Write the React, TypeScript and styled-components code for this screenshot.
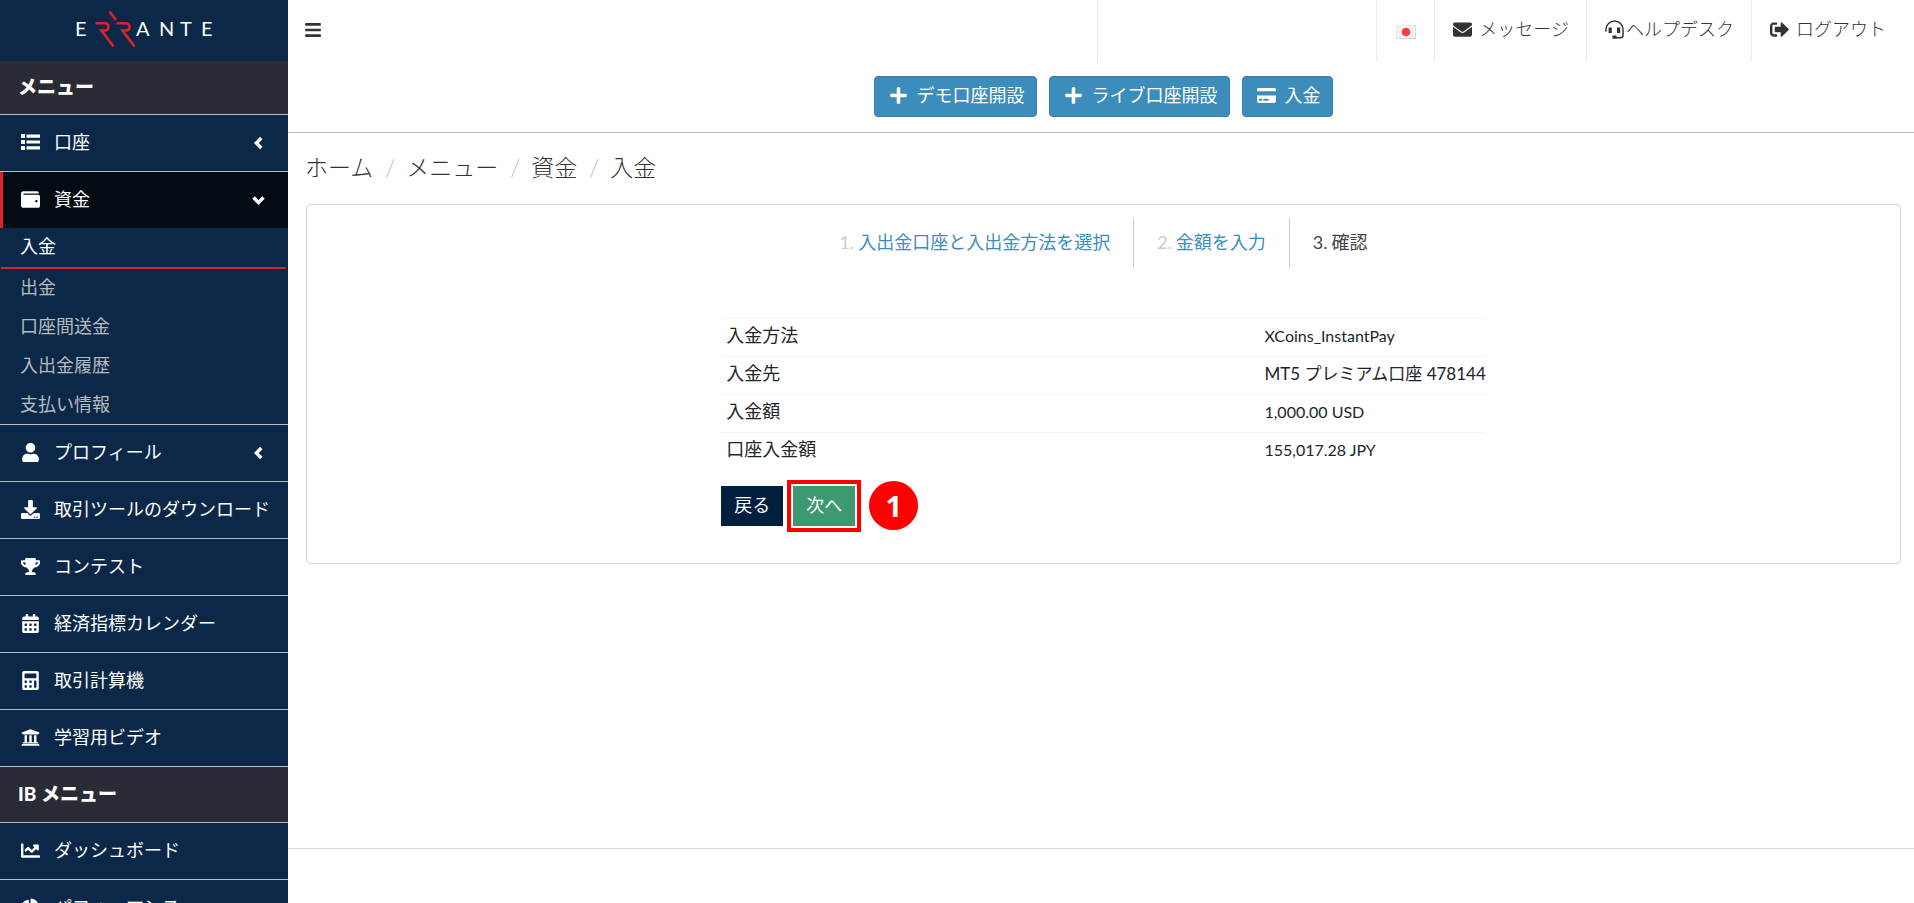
import React from 'react';
import styled, { createGlobalStyle, css } from 'styled-components';
import {
  FaBars,
  FaCalculator,
  FaCalendarAlt,
  FaChartLine,
  FaChartPie,
  FaCreditCard,
  FaDownload,
  FaEnvelope,
  FaPlus,
  FaSignOutAlt,
  FaTrophy,
  FaUniversity,
  FaUser,
  FaWallet,
} from 'react-icons/fa';

const GlobalStyle = createGlobalStyle`
  *, *::before, *::after { box-sizing: border-box; }
  body {
    margin: 0;
    background: #fff;
    color: #212529;
    font-family: Lato, "Noto Sans CJK JP", sans-serif;
    font-size: 18px;
    line-height: 24px;
  }
  a { color: inherit; text-decoration: none; }
  ul, ol { margin: 0; padding: 0; list-style: none; }
  button { font: inherit; cursor: pointer; }
`;

const Page = styled.div`
  display: flex;
  height: 100vh;
  overflow: hidden;
`;

const Sidebar = styled.aside`
  flex: 0 0 288px;
  overflow: hidden;
  background: #0c2848;
  color: #fff;
`;

const Brand = styled.a`
  display: flex;
  justify-content: center;
  height: 61px;
  padding-top: 8px;
`;

const MenuHeading = styled.h2`
  display: flex;
  align-items: center;
  height: 54px;
  margin: 0;
  padding: 0 18px 2px;
  border-bottom: 1px solid #b9bec4;
  background: #292c34;
  font-size: 19px;
  font-weight: 900;
  &:not(:first-child) { height: 56px; }
`;

const MenuLink = styled.a<{ $open?: boolean }>`
  display: flex;
  align-items: center;
  height: 57px;
  padding: 0 22px 2px 21px;
  border-bottom: 1px solid #b9bec4;
  white-space: nowrap;
  ${(p) =>
    p.$open &&
    css`
      height: 56px;
      padding-left: 18px;
      border-left: 3px solid #dc2328;
      border-bottom: 0;
      background: #040b13;
    `}
`;

const MenuIcon = styled.span`
  display: flex;
  flex: 0 0 33px;
  font-size: 19px;
  svg { width: auto; height: 19px; }
`;

const MenuArrow = styled.svg`
  flex: none;
  margin: 1px 0 0 auto;
`;

const SubItem = styled.li<{ $active?: boolean }>`
  height: 39px;
  padding: 6px 20px 0;
  color: #b9bcbf;
  &:last-child { border-bottom: 1px solid #b9bec4; }
  ${(p) =>
    p.$active &&
    css`
      height: 41px;
      margin: 0 2px 0 1px;
      padding-left: 19px;
      border-bottom: 2px solid #dc2328;
      color: #fff;
    `}
`;

const Main = styled.div`
  display: flex;
  flex: 1;
  flex-direction: column;
  min-width: 0;
`;

const Header = styled.header`
  border-bottom: 1px solid #b9b9b9;
`;

const TopBar = styled.div`
  display: flex;
  justify-content: space-between;
  height: 62px;
`;

const Toggle = styled.button`
  display: flex;
  align-items: center;
  padding: 0 16px 2px;
  border: 0;
  background: none;
  color: #333;
  font-size: 18px;
`;

const TopNav = styled.nav`
  display: flex;
`;

const NavSlot = styled.div`
  width: 279px;
  border-left: 1px solid #ededed;
`;

const NavLink = styled.a<{ $gap?: number; $last?: boolean }>`
  display: flex;
  align-items: center;
  gap: ${(p) => p.$gap ?? 7}px;
  padding: 0 ${(p) => (p.$last ? 28 : 17)}px 4px 18px;
  border-left: 1px solid #ededed;
  color: #333;
  font-weight: 300;
  svg { font-size: 19px; }
`;

const Flag = styled.svg`
  margin-top: 6px;
`;

const Actions = styled.div`
  display: flex;
  justify-content: center;
  gap: 12px;
  padding: 14px 0 15px 4px;
`;

const ActionButton = styled.button`
  display: flex;
  align-items: center;
  gap: 9px;
  height: 41px;
  padding: 0 11px 3px 14px;
  border: 1px solid #367fa9;
  border-radius: 4px;
  background: #3c8dbc;
  color: #fff;
  svg { width: auto; height: 19px; }
`;

const Crumbs = styled.ol`
  display: flex;
  align-items: center;
  height: 71px;
  padding: 0 0 4px 17px;
  color: #333;
  font-size: 23px;
  font-weight: 300;
`;

const Crumb = styled.li`
  & + &::before {
    content: "/";
    padding: 0 11px 0 12px;
    color: #bbb;
  }
`;

const Card = styled.section`
  min-height: 360px;
  margin: 0 13px 0 18px;
  padding: 13px 0 35px;
  border: 1px solid #d2d6de;
  border-radius: 4px;
`;

const Steps = styled.ol`
  display: flex;
  justify-content: center;
`;

const Step = styled.li<{ $done?: boolean }>`
  display: flex;
  gap: 4px;
  height: 50px;
  padding: 12px 23px 0;
  color: ${(p) => (p.$done ? '#ccc' : '#444')};
  & + & { border-left: 1px solid #ccc; }
  a { color: #3c8dbc; }
`;

const Details = styled.div`
  width: 48%;
  margin: 50px auto 0;
`;

const Table = styled.table`
  width: 100%;
  border-collapse: collapse;
  th, td {
    height: 38px;
    padding: 0 0 5px 5px;
    border-top: 1px solid #f4f4f4;
    font-weight: 400;
    text-align: left;
    white-space: nowrap;
  }
  td {
    width: 227px;
    padding: 0 0 3px 6px;
    font-size: 16px;
  }
  td:lang(ja) { font-size: 17px; }
`;

const FormButtons = styled.div`
  display: flex;
  gap: 10px;
  margin-top: 15px;
`;

const FormButton = styled.button<{ $primary?: boolean }>`
  height: 40px;
  padding: 0 13px 2px;
  border: 0;
  background: ${(p) => (p.$primary ? '#3d9970' : '#001f3f')};
  color: #fff;
`;

const Highlighted = styled.div`
  position: relative;
  height: 40px;
  outline: 4px solid #f00;
  outline-offset: 2px;
`;

const StepMarker = styled.span`
  position: absolute;
  top: -5px;
  left: calc(100% + 14px);
  display: grid;
  place-items: center;
  width: 49px;
  height: 49px;
  border-radius: 50%;
  background: #f00;
  color: #fff;
  font: 700 29px/49px "Noto Sans", sans-serif;
`;

const Footer = styled.footer`
  height: 55px;
  margin-top: auto;
  border-top: 1px solid #d2d6de;
`;

function Logo() {
  return (
    <svg width="138" height="42" viewBox="0 0 138 42" role="img" aria-label="ERRANTE">
      <text
        x="0 61 84 105 126"
        y="28"
        fill="#fff"
        fontFamily="Lato, sans-serif"
        fontSize="20"
      >
        EANTE
      </text>
      <g fill="none" stroke="#dc2328" strokeWidth="2.600">
        <path d="M20.500 15.300h9c5 0 5.500 6.800 0 7.200h-3l12 16" />
        <path d="M34.500 3.500l6.500 8.500M41.500 15.300h9c5 0 5.500 6.800 0 7.200h-3l12 16" />
      </g>
    </svg>
  );
}

function ListIcon() {
  return (
    <svg viewBox="0 0 19 19" width="19" height="19" fill="currentColor">
      <path d="M0 1h4v4H0zM5.500 1.500H19v3.200H5.500zM0 7h4v4H0zM5.500 7.400H19v3.200H5.500zM0 13h4v4H0zM5.500 13.300H19v3.200H5.500z" />
    </svg>
  );
}

function HeadsetIcon() {
  return (
    <svg viewBox="0 0 19 19" width="19" height="19" fill="none" stroke="currentColor">
      <path d="M1 11.500V9.500a8.500 8.500 0 0 1 17 0v6a2.200 2.200 0 0 1-2.200 2.200H11" strokeWidth="1.500" />
      <path d="M5.200 7.400v5.600M13.600 7.400v5.600M7.500 17.200h4" strokeWidth="3.200" />
    </svg>
  );
}

function Arrow({ down }: { down?: boolean }) {
  return (
    <MenuArrow
      width="14"
      height="14"
      viewBox="0 0 14 14"
      fill="none"
      stroke="currentColor"
      strokeWidth="3.400"
    >
      <path d={down ? 'M1.500 4.500l5 5 5-5' : 'M9.300 2l-5 5 5 5'} />
    </MenuArrow>
  );
}

interface MenuEntry {
  label: string;
  Icon: React.ComponentType;
  arrow?: boolean;
}

const accounts: MenuEntry = { label: '口座', Icon: ListIcon, arrow: true };
const fundLinks = ['入金', '出金', '口座間送金', '入出金履歴', '支払い情報'];
const tools: MenuEntry[] = [
  { label: 'プロフィール', Icon: FaUser, arrow: true },
  { label: '取引ツールのダウンロード', Icon: FaDownload },
  { label: 'コンテスト', Icon: FaTrophy },
  { label: '経済指標カレンダー', Icon: FaCalendarAlt },
  { label: '取引計算機', Icon: FaCalculator },
  { label: '学習用ビデオ', Icon: FaUniversity },
];
const partnerLinks: MenuEntry[] = [
  { label: 'ダッシュボード', Icon: FaChartLine },
  { label: 'パフォーマンス', Icon: FaChartPie },
];
const details: { name: string; value: string; lang: string }[] = [
  { name: '入金方法', value: 'XCoins_InstantPay', lang: 'en' },
  { name: '入金先', value: 'MT5 プレミアム口座 478144', lang: 'ja' },
  { name: '入金額', value: '1,000.00 USD', lang: 'en' },
  { name: '口座入金額', value: '155,017.28 JPY', lang: 'en' },
];

function MenuRow({ label, Icon, arrow }: MenuEntry) {
  return (
    <MenuLink href="#">
      <MenuIcon><Icon /></MenuIcon>
      {label}
      {arrow && <Arrow />}
    </MenuLink>
  );
}

export default function App() {
  return (
    <Page>
      <GlobalStyle />
      <Sidebar>
        <Brand href="#"><Logo /></Brand>
        <nav>
          <MenuHeading>メニュー</MenuHeading>
          <MenuRow {...accounts} />
          <MenuLink href="#" $open>
            <MenuIcon><FaWallet /></MenuIcon>
            資金
            <Arrow down />
          </MenuLink>
          <ul>
            {fundLinks.map((label, i) => (
              <SubItem key={label} $active={i === 0}>
                <a href="#">{label}</a>
              </SubItem>
            ))}
          </ul>
          {tools.map((entry) => <MenuRow key={entry.label} {...entry} />)}
          <MenuHeading>IB メニュー</MenuHeading>
          {partnerLinks.map((entry) => <MenuRow key={entry.label} {...entry} />)}
        </nav>
      </Sidebar>

      <Main>
        <Header>
          <TopBar>
            <Toggle type="button" aria-label="メニュー"><FaBars /></Toggle>
            <TopNav>
              <NavSlot />
              <NavLink href="#" aria-label="日本語">
                <Flag width="22" height="14" viewBox="0 0 22 14">
                  <defs>
                    <linearGradient id="cloth" x1="0" y1="0" x2="1" y2="1">
                      <stop offset="0" stopColor="#f4f4f4" />
                      <stop offset="1" stopColor="#cfcfcf" />
                    </linearGradient>
                  </defs>
                  <rect x="1" width="20" height="14" fill="url(#cloth)" />
                  <rect x="2" y="1" width="18" height="12" fill="#f3f3f3" />
                  <circle cx="11" cy="7" r="4.300" fill="#ff3a3a" />
                </Flag>
              </NavLink>
              <NavLink href="#"><FaEnvelope />メッセージ</NavLink>
              <NavLink href="#" $gap={2}><HeadsetIcon />ヘルプデスク</NavLink>
              <NavLink href="#" $last><FaSignOutAlt />ログアウト</NavLink>
            </TopNav>
          </TopBar>
          <Actions>
            <ActionButton type="button"><FaPlus />デモ口座開設</ActionButton>
            <ActionButton type="button"><FaPlus />ライブ口座開設</ActionButton>
            <ActionButton type="button"><FaCreditCard />入金</ActionButton>
          </Actions>
        </Header>

        <main>
          <Crumbs>
            <Crumb><a href="#">ホーム</a></Crumb>
            <Crumb>メニュー</Crumb>
            <Crumb>資金</Crumb>
            <Crumb>入金</Crumb>
          </Crumbs>
          <Card>
            <Steps>
              <Step $done>1. <a href="#">入出金口座と入出金方法を選択</a></Step>
              <Step $done>2. <a href="#">金額を入力</a></Step>
              <Step>3. <span>確認</span></Step>
            </Steps>
            <Details>
              <Table>
                <tbody>
                  {details.map(({ name, value, lang }) => (
                    <tr key={name}>
                      <th scope="row">{name}</th>
                      <td lang={lang}>{value}</td>
                    </tr>
                  ))}
                </tbody>
              </Table>
              <FormButtons>
                <FormButton type="button">戻る</FormButton>
                <Highlighted>
                  <FormButton type="button" $primary>次へ</FormButton>
                  <StepMarker>1</StepMarker>
                </Highlighted>
              </FormButtons>
            </Details>
          </Card>
        </main>
        <Footer />
      </Main>
    </Page>
  );
}
